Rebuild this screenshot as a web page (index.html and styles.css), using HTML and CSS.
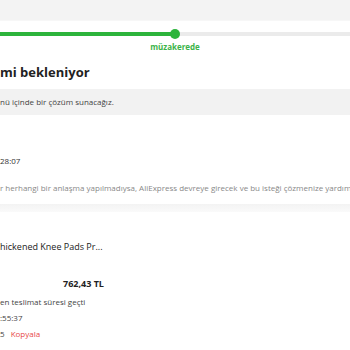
FILE: index.html
```html
<!DOCTYPE html>
<html lang="tr">
<head>
    <meta charset="UTF-8">
    <title>İade talebi</title>
    <link rel="stylesheet" href="styles.css">
</head>
<body>
    <div class="topbar"></div>
    <div class="panel">
        <div class="track">
            <div class="track-fill"><span class="dot"></span></div>
        </div>
        <div class="step-label">müzakerede</div>
        <h1 class="title">mi bekleniyor</h1>
    </div>
    <div class="notice">nü içinde bir çözüm sunacağız.</div>
    <div class="info">
        <div class="time">28:07</div>
        <div class="hint">r herhangi bir anlaşma yapılmadıysa, AliExpress devreye girecek ve bu isteği çözmenize yardımc</div>
    </div>
    <div class="divider"></div>
    <div class="order">
        <div class="product">hickened Knee Pads Pr...</div>
        <div class="price">762,43 TL</div>
        <div class="line">en teslimat süresi geçti</div>
        <div class="line">:55:37</div>
        <div class="line">5 <span class="copy">Kopyala</span></div>
    </div>
</body>
</html>
```

FILE: styles.css
```css
body {
    margin: 0;
    width: 350px;
    height: 350px;
    overflow: hidden;
    font-family: "Open Sans", Arial, sans-serif;
    color: #333;
    background: #fff;
}
.topbar {
    height: 20px;
    background: #f3f3f3;
    border-bottom: 1px solid #f7f7f7;
}
.panel {
    padding-top: 11px;
}
.track {
    height: 4px;
    background: #ebebeb;
}
.track-fill {
    position: relative;
    width: 175px;
    height: 4px;
    background: #2db43c;
}
.dot {
    position: absolute;
    right: -5px;
    top: -3px;
    width: 10px;
    height: 10px;
    border-radius: 50%;
    background: #2db43c;
}
.step-label {
    width: 80px;
    margin-left: 135px;
    margin-top: 5px;
    text-align: center;
    font-size: 8px;
    font-weight: 700;
    color: #3cb44a;
    line-height: 12px;
}
.title {
    margin: 9px 0 0;
    font-size: 13px;
    font-weight: 700;
    line-height: 20px;
    color: #222;
    padding-bottom: 7px;
}
.notice {
    height: 26px;
    line-height: 26px;
    background: #f2f2f2;
    font-size: 8px;
    color: #444;
}
.info {
    height: 89px;
    padding-top: 39px;
    box-sizing: border-box;
}
.time {
    font-size: 8px;
    line-height: 14px;
    color: #333;
}
.hint {
    margin-top: 13px;
    font-size: 8px;
    line-height: 14px;
    color: #888;
    white-space: nowrap;
    overflow: hidden;
}
.divider {
    height: 8px;
    background: linear-gradient(to bottom, #f3f3f3, #fafafa);
}
.order {
    padding-top: 28px;
    height: 140px;
    box-sizing: border-box;
    border-bottom: 1px solid #eee;
}
.product {
    font-size: 9px;
    line-height: 14px;
    color: #222;
}
.price {
    margin-top: 23px;
    margin-left: 63px;
    font-size: 9px;
    font-weight: 700;
    line-height: 14px;
    color: #222;
}
.line {
    font-size: 8px;
    line-height: 16px;
    color: #444;
}
.price + .line {
    margin-top: 3px;
}
.copy {
    margin-left: 4px;
    color: #e84848;
}
```
